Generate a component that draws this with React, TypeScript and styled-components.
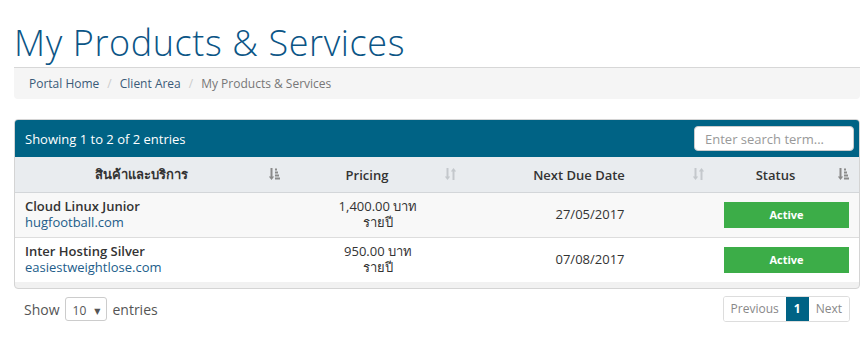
import React from "react";
import styled, {createGlobalStyle} from "styled-components";

const GlobalStyle = createGlobalStyle`
  body {
    margin: 0;
    background: #fff;
    font-family: "Open Sans", "Noto Sans", "DejaVu Sans", sans-serif;
    color: #333;
  }
`;

const Page = styled.div`
  width: 846px;
  padding: 22px 8px 0 14px;
`;

const Title = styled.h1`
  margin: 0 0 4px;
  font-family: "Open Sans", sans-serif;
  font-weight: 300;
  font-size: 36px;
  letter-spacing: 0.6px;
  line-height: 41px;
  color: #0b5586;
`;

const Breadcrumb = styled.ol`
  list-style: none;
  margin: 0 0 20px;
  padding: 0 15px;
  height: 31px;
  display: flex;
  align-items: center;
  background: #f5f5f5;
  border-top: 1px solid #d7d7d7;
  border-radius: 0 0 4px 4px;
  font-size: 12px;
`;

const Crumb = styled.li<{ $active?: boolean }>`
  color: ${({$active}) => ($active ? "#777" : "#3a5a78")};

  &:not(:first-child)::before {
    content: "/";
    color: #ccc;
    padding: 0 8px;
  }
`;

const Panel = styled.div`
  border: 1px solid #d4d4d4;
  border-radius: 4px;
  overflow: hidden;
  background: #f1f1f1;
  padding-bottom: 6px;
`;

const PanelHeader = styled.div`
  height: 37px;
  background: #006385;
  display: flex;
  align-items: center;
  justify-content: space-between;
  padding: 0 5px 0 10px;
  color: #fff;
  font-size: 13px;
`;

const Search = styled.input`
  width: 160px;
  height: 25px;
  box-sizing: border-box;
  border: 1px solid #ccc;
  border-radius: 4px;
  padding: 0 10px;
  font-family: inherit;
  font-size: 13px;
  color: #555;

  &::placeholder {
    color: #999;
  }
`;

const Table = styled.table`
  width: 100%;
  border-collapse: collapse;
  table-layout: fixed;
  font-size: 13px;
`;

const Th = styled.th`
  position: relative;
  height: 35px;
  padding: 0 30px 0 8px;
  background: #e9ecef;
  border-bottom: 1px solid #d3d6d9;
  font-weight: 600;
  color: #333;
  text-align: center;

  svg {
    position: absolute;
    right: 10px;
    top: 11px;
  }
`;

const Tr = styled.tr<{ $striped?: boolean }>`
  background: ${({$striped}) => ($striped ? "#f8f8f8" : "#fff")};

  &:not(:first-child) td {
    border-top: 1px solid #ddd;
  }
`;

const Td = styled.td<{ $align?: string }>`
  height: 41px;
  padding: 0 10px 3px;
  text-align: ${({$align}) => $align || "center"};
  color: #333;
  line-height: 16px;
`;

const Product = styled.div`
  font-weight: 600;
  color: #333;
`;

const Domain = styled.a`
  color: #225d8a;
  text-decoration: none;
`;

const StatusLabel = styled.span`
  display: block;
  height: 26px;
  line-height: 26px;
  margin-top: 3px;
  background: #3cad48;
  color: #fff;
  font-size: 11px;
  font-weight: 700;
`;

const Footer = styled.div`
  display: flex;
  justify-content: space-between;
  align-items: center;
  padding: 7px 10px 0 10px;
`;

const Length = styled.div`
  display: flex;
  align-items: center;
  gap: 5px;
  font-size: 14px;
  color: #555;
`;

const Select = styled.span`
  display: inline-flex;
  align-items: center;
  gap: 8px;
  height: 24px;
  box-sizing: border-box;
  padding: 2px 6px 0 7px;
  border: 1px solid #ccc;
  border-radius: 3px;
  font-size: 12px;
  color: #555;

  &::after {
    content: "▼";
    font-size: 8px;
  }
`;

const Pager = styled.ul`
  list-style: none;
  margin: 0;
  padding: 0;
  display: flex;
  border: 1px solid #ddd;
  border-radius: 3px;
  overflow: hidden;
`;

const PageItem = styled.li<{ $active?: boolean }>`
  height: 24px;
  line-height: 24px;
  padding: 0 ${({$active}) => ($active ? "8px" : "7px")};
  font-size: 12px;
  color: ${({$active}) => ($active ? "#fff" : "#888")};
  background: ${({$active}) => ($active ? "#006385" : "#fff")};
  font-weight: ${({$active}) => ($active ? 700 : 400)};
`;

const SortIcon: React.FC<{ active?: boolean }> = ({active}) => {
    const c = active ? "#8a8a8a" : "#c4c8cc";
    return (
        <svg width="12" height="12" viewBox="0 0 12 12">
            <path d="M2.5 0v8.5H0.8L3.5 12 6.2 8.5H4.5V0z" fill={c}/>
            {active ? (
                <>
                    <rect x="7" y="0.5" width="2" height="2" fill={c}/>
                    <rect x="7" y="3.5" width="3" height="2" fill={c}/>
                    <rect x="7" y="6.5" width="4" height="2" fill={c}/>
                    <rect x="7" y="9.5" width="5" height="2" fill={c}/>
                </>
            ) : (
                <path d="M8.5 12V3.5H6.8L9.5 0 12.2 3.5H10.5V12z" fill={c}/>
            )}
        </svg>
    );
};

const rows = [
    {name: "Cloud Linux Junior", domain: "hugfootball.com", price: "1,400.00 บาท", due: "27/05/2017"},
    {name: "Inter Hosting Silver", domain: "easiestweightlose.com", price: "950.00 บาท", due: "07/08/2017"},
];

export default function App() {
    return (
        <>
            <GlobalStyle/>
            <Page>
                <Title>My Products &amp; Services</Title>
                <Breadcrumb>
                    <Crumb>Portal Home</Crumb>
                    <Crumb>Client Area</Crumb>
                    <Crumb $active>My Products &amp; Services</Crumb>
                </Breadcrumb>
                <Panel>
                    <PanelHeader>
                        Showing 1 to 2 of 2 entries
                        <Search placeholder="Enter search term..."/>
                    </PanelHeader>
                    <Table>
                        <colgroup>
                            <col style={{width: 275}}/>
                            <col style={{width: 176}}/>
                            <col style={{width: 248}}/>
                            <col/>
                        </colgroup>
                        <thead>
                        <tr>
                            <Th>สินค้าและบริการ<SortIcon active/></Th>
                            <Th>Pricing<SortIcon/></Th>
                            <Th>Next Due Date<SortIcon/></Th>
                            <Th>Status<SortIcon active/></Th>
                        </tr>
                        </thead>
                        <tbody>
                        {rows.map((r, i) => (
                            <Tr key={r.domain} $striped={i % 2 === 0}>
                                <Td $align="left">
                                    <Product>{r.name}</Product>
                                    <Domain href="#">{r.domain}</Domain>
                                </Td>
                                <Td>{r.price}<br/>รายปี</Td>
                                <Td>{r.due}</Td>
                                <Td><StatusLabel>Active</StatusLabel></Td>
                            </Tr>
                        ))}
                        </tbody>
                    </Table>
                </Panel>
                <Footer>
                    <Length>Show <Select>10</Select> entries</Length>
                    <Pager>
                        <PageItem>Previous</PageItem>
                        <PageItem $active>1</PageItem>
                        <PageItem>Next</PageItem>
                    </Pager>
                </Footer>
            </Page>
        </>
    );
}
